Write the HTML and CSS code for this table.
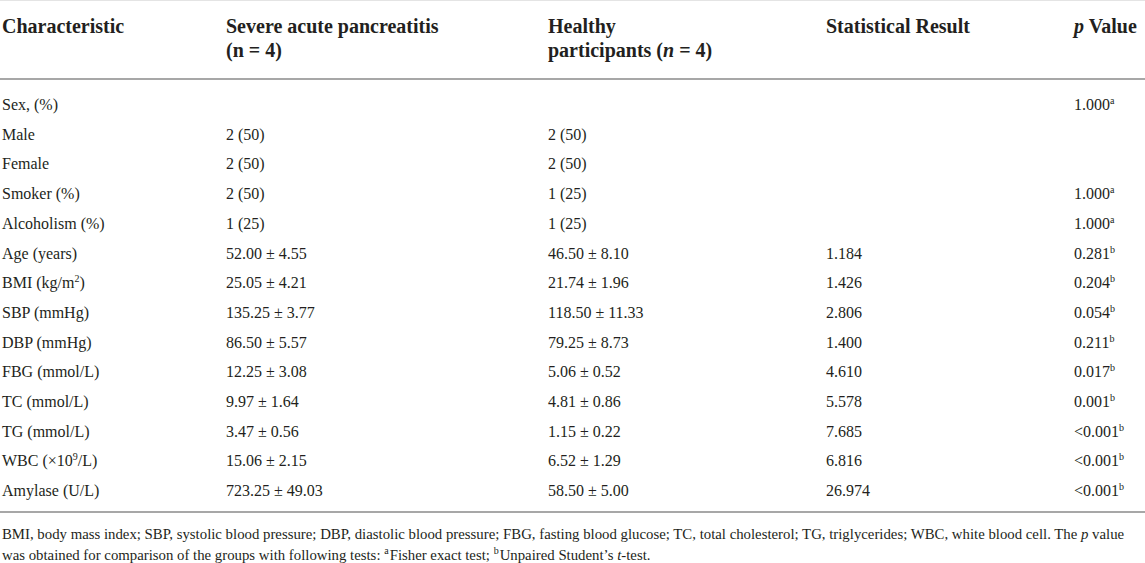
FILE: index.html
```html
<!DOCTYPE html>
<html lang="en">
<head>
    <meta charset="UTF-8">
    <meta name="viewport" content="width=device-width, initial-scale=1.0">
    <title>Characteristics of participants</title>
    <link rel="stylesheet" href="styles.css">
</head>
<body>

    <div class="table-wrap">
        <table class="data-table">
            <colgroup>
                <col class="col-char">
                <col class="col-sap">
                <col class="col-healthy">
                <col class="col-stat">
                <col class="col-p">
            </colgroup>
            <thead>
                <tr>
                    <th>Characteristic</th>
                    <th>Severe acute pancreatitis<br>(n = 4)</th>
                    <th>Healthy<br>participants (<i>n</i> = 4)</th>
                    <th>Statistical Result</th>
                    <th><i>p</i> Value</th>
                </tr>
            </thead>
            <tbody>
                <tr class="first">
                    <td>Sex, (%)</td>
                    <td></td>
                    <td></td>
                    <td></td>
                    <td>1.000<sup>a</sup></td>
                </tr>
                <tr>
                    <td>Male</td>
                    <td>2 (50)</td>
                    <td>2 (50)</td>
                    <td></td>
                    <td></td>
                </tr>
                <tr>
                    <td>Female</td>
                    <td>2 (50)</td>
                    <td>2 (50)</td>
                    <td></td>
                    <td></td>
                </tr>
                <tr>
                    <td>Smoker (%)</td>
                    <td>2 (50)</td>
                    <td>1 (25)</td>
                    <td></td>
                    <td>1.000<sup>a</sup></td>
                </tr>
                <tr>
                    <td>Alcoholism (%)</td>
                    <td>1 (25)</td>
                    <td>1 (25)</td>
                    <td></td>
                    <td>1.000<sup>a</sup></td>
                </tr>
                <tr>
                    <td>Age (years)</td>
                    <td>52.00 ± 4.55</td>
                    <td>46.50 ± 8.10</td>
                    <td>1.184</td>
                    <td>0.281<sup>b</sup></td>
                </tr>
                <tr>
                    <td>BMI (kg/m<sup>2</sup>)</td>
                    <td>25.05 ± 4.21</td>
                    <td>21.74 ± 1.96</td>
                    <td>1.426</td>
                    <td>0.204<sup>b</sup></td>
                </tr>
                <tr>
                    <td>SBP (mmHg)</td>
                    <td>135.25 ± 3.77</td>
                    <td>118.50 ± 11.33</td>
                    <td>2.806</td>
                    <td>0.054<sup>b</sup></td>
                </tr>
                <tr>
                    <td>DBP (mmHg)</td>
                    <td>86.50 ± 5.57</td>
                    <td>79.25 ± 8.73</td>
                    <td>1.400</td>
                    <td>0.211<sup>b</sup></td>
                </tr>
                <tr>
                    <td>FBG (mmol/L)</td>
                    <td>12.25 ± 3.08</td>
                    <td>5.06 ± 0.52</td>
                    <td>4.610</td>
                    <td>0.017<sup>b</sup></td>
                </tr>
                <tr>
                    <td>TC (mmol/L)</td>
                    <td>9.97 ± 1.64</td>
                    <td>4.81 ± 0.86</td>
                    <td>5.578</td>
                    <td>0.001<sup>b</sup></td>
                </tr>
                <tr>
                    <td>TG (mmol/L)</td>
                    <td>3.47 ± 0.56</td>
                    <td>1.15 ± 0.22</td>
                    <td>7.685</td>
                    <td>&lt;0.001<sup>b</sup></td>
                </tr>
                <tr>
                    <td>WBC (×10<sup>9</sup>/L)</td>
                    <td>15.06 ± 2.15</td>
                    <td>6.52 ± 1.29</td>
                    <td>6.816</td>
                    <td>&lt;0.001<sup>b</sup></td>
                </tr>
                <tr class="last">
                    <td>Amylase (U/L)</td>
                    <td>723.25 ± 49.03</td>
                    <td>58.50 ± 5.00</td>
                    <td>26.974</td>
                    <td>&lt;0.001<sup>b</sup></td>
                </tr>
            </tbody>
        </table>

        <p class="footnote">BMI, body mass index; SBP, systolic blood pressure; DBP, diastolic blood pressure; FBG, fasting blood glucose; TC, total cholesterol; TG, triglycerides; WBC, white blood cell. The <i>p</i> value<br>was obtained for comparison of the groups with following tests: <sup>a</sup>Fisher exact test; <sup>b</sup>Unpaired Student’s <i>t</i>-test.</p>
    </div>

</body>
</html>
```

FILE: styles.css
```css
html {
    overflow: hidden;
}

body {
    margin: 0;
    background-color: #fff;
    color: #231f20;
    font-family: 'Liberation Serif', 'Times New Roman', serif;
}

.table-wrap {
    width: 1145px;
    border-top: 1px solid #e4e4e4;
}

.data-table {
    width: 100%;
    border-collapse: collapse;
    table-layout: fixed;
}

.col-char { width: 224px; }
.col-sap { width: 322px; }
.col-healthy { width: 278px; }
.col-stat { width: 248px; }
.col-p { width: 73px; }

th {
    text-align: left;
    vertical-align: top;
    font-size: 20px;
    font-weight: bold;
    line-height: 24px;
    padding: 13px 0 16px 2px;
    border-bottom: 2px solid #a7a7a7;
    white-space: nowrap;
}

td {
    font-size: 16px;
    line-height: 17.7px;
    padding: 6px 0 6px 2px;
    white-space: nowrap;
}

tr.first td {
    padding-top: 16px;
}

tr.last td {
    padding-bottom: 11px;
}

tbody tr.last {
    border-bottom: 2px solid #a7a7a7;
}

sup {
    font-size: 10px;
    line-height: 0;
    vertical-align: 6px;
}

.footnote sup {
    margin-right: 1px;
}

.footnote {
    margin: 0;
    padding: 11px 0 0 2px;
    font-size: 14.8px;
    line-height: 21px;
}
```
